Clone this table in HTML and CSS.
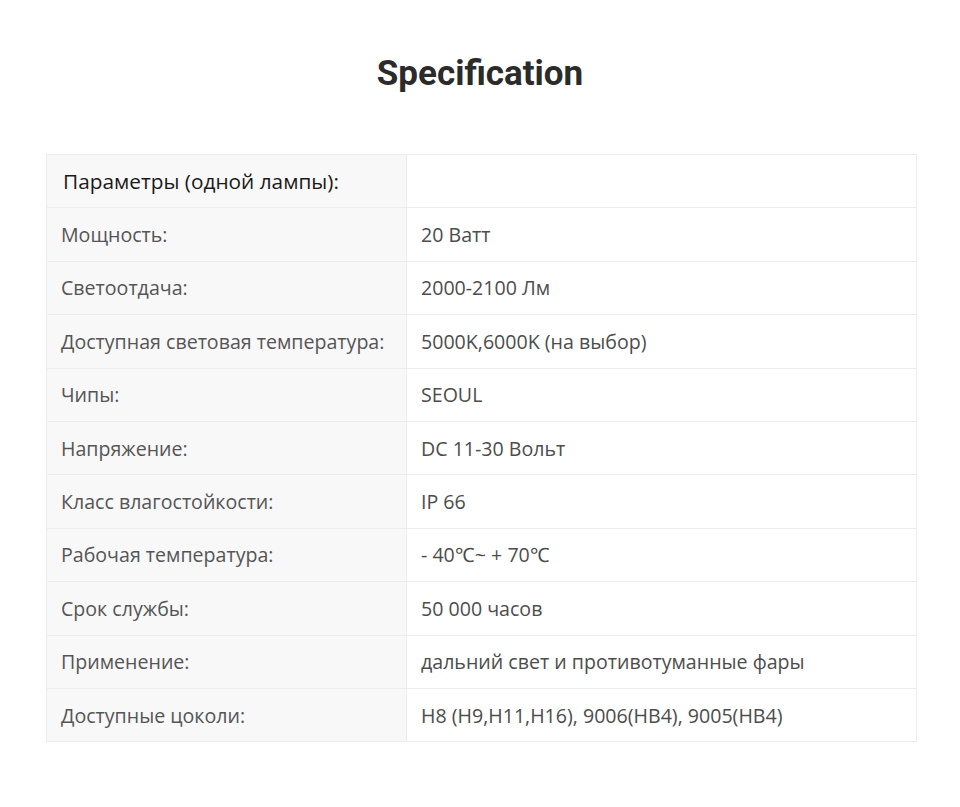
FILE: index.html
```html
<!DOCTYPE html>
<html lang="ru">
<head>
<meta charset="utf-8">
<link rel="stylesheet" href="styles.css">
</head>
<body>
<div class="page">
  <h1 class="title">Specification</h1>
  <table class="spec">
    <tr class="head"><td class="k">Параметры (одной лампы):</td><td class="v"></td></tr>
    <tr><td class="k">Мощность:</td><td class="v">20 Ватт</td></tr>
    <tr><td class="k">Светоотдача:</td><td class="v">2000-2100 Лм</td></tr>
    <tr><td class="k">Доступная световая температура:</td><td class="v">5000K,6000K (на выбор)</td></tr>
    <tr><td class="k">Чипы:</td><td class="v">SEOUL</td></tr>
    <tr><td class="k">Напряжение:</td><td class="v">DC 11-30 Вольт</td></tr>
    <tr><td class="k">Класс влагостойкости:</td><td class="v">IP 66</td></tr>
    <tr><td class="k">Рабочая температура:</td><td class="v">- 40℃~ + 70℃</td></tr>
    <tr><td class="k">Срок службы:</td><td class="v">50 000 часов</td></tr>
    <tr><td class="k">Применение:</td><td class="v">дальний свет и противотуманные фары</td></tr>
    <tr><td class="k">Доступные цоколи:</td><td class="v">H8 (H9,H11,H16), 9006(HB4), 9005(HB4)</td></tr>
  </table>
</div>
</body>
</html>
```
FILE: styles.css
```css
html, body {
  margin: 0;
  padding: 0;
  background: #fff;
}
.page {
  width: 960px;
  height: 807px;
  padding-top: 52px;
  box-sizing: border-box;
}
.title {
  margin: 0;
  text-align: center;
  font-family: Roboto, "Liberation Sans", sans-serif;
  font-weight: 700;
  font-size: 35px;
  line-height: 44px;
  color: #2b2b2b;
}
.spec {
  margin: 58px 0 0 46px;
  width: 871px;
  border-collapse: collapse;
  font-family: "Open Sans", "Liberation Sans", sans-serif;
  font-size: 19.6px;
}
.spec td {
  height: 53.4px;
  padding: 0 0 0 14px;
  border: 1px solid #ececec;
  color: #555;
  box-sizing: border-box;
}
.spec td.k {
  width: 360px;
  background: #f8f8f8;
}
.spec td.v {
  background: #fff;
  color: #4d4d4d;
}
.spec tr.head td.k {
  padding-left: 16px;
  color: #1a1a1a;
  font-size: 20.8px;
  font-weight: 500;
}
```
